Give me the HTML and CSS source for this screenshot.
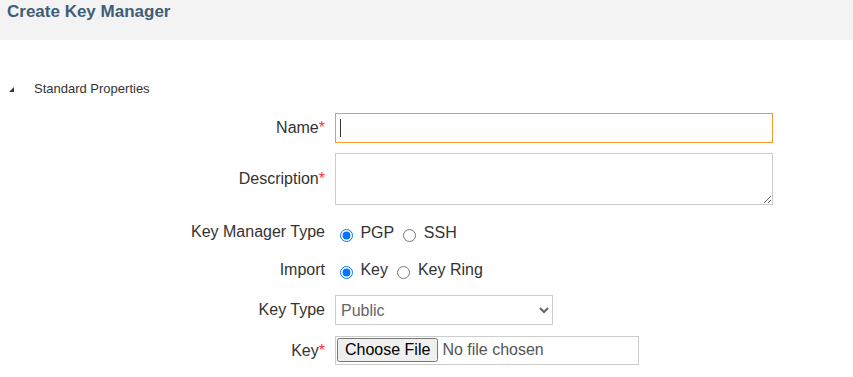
FILE: index.html
```html
<!DOCTYPE html>
<html>
<head>
<meta charset="utf-8">
<link rel="stylesheet" href="styles.css">
</head>
<body>
<div class="page-header"><h1 class="title">Create Key Manager</h1></div>
<div class="section-head"><span class="tri"></span><span class="section-title">Standard Properties</span></div>
<form class="form">
  <div class="row r-name">
    <label class="lbl" for="name">Name<span class="req">*</span></label>
    <div class="ctl input-wrap"><input id="name" class="text-input focused" type="text"><span class="caret"></span></div>
  </div>
  <div class="row r-desc">
    <label class="lbl" for="desc">Description<span class="req">*</span></label>
    <div class="ctl"><textarea id="desc" class="text-area"></textarea></div>
  </div>
  <div class="row r-kmt">
    <span class="lbl lbl-up">Key Manager Type</span>
    <div class="ctl radios"><input type="radio" name="kmt" checked> PGP <input type="radio" name="kmt"> SSH</div>
  </div>
  <div class="row r-imp">
    <span class="lbl">Import</span>
    <div class="ctl radios"><input type="radio" name="imp" checked> Key <input type="radio" name="imp"> Key Ring</div>
  </div>
  <div class="row r-type">
    <label class="lbl" for="ktype">Key Type</label>
    <div class="ctl"><select id="ktype" class="sel"><option>Public</option><option>Private</option></select></div>
  </div>
  <div class="row r-key">
    <label class="lbl" for="kfile">Key<span class="req">*</span></label>
    <div class="ctl"><input id="kfile" class="file" type="file"></div>
  </div>
</form>
</body>
</html>
```
FILE: styles.css
```css
html, body {
  margin: 0;
  padding: 0;
  background: #fff;
  font-family: "Liberation Sans", Arial, sans-serif;
  color: #333;
}
.page-header {
  height: 40px;
  box-sizing: border-box;
  background: #f3f3f3;
  padding: 2px 7px 0;
}
.title {
  margin: 0;
  font-size: 17px;
  line-height: 20px;
  font-weight: bold;
  color: #3e5e79;
}
.section-head {
  display: flex;
  align-items: center;
  height: 16px;
  margin-top: 41px;
  padding-left: 9px;
}
.tri {
  width: 0;
  height: 0;
  border-left: 5px solid transparent;
  border-bottom: 5px solid #3a3a3a;
  margin-right: 20px;
  margin-top: 1px;
}
.section-title {
  font-size: 13px;
  line-height: 16px;
  color: #333;
}
.form {
  margin: 16px 0 0;
  display: flex;
  flex-direction: column;
}
.row {
  display: grid;
  grid-template-columns: 325px 1fr;
  column-gap: 10px;
  align-items: center;
}
.r-name { height: 30px; margin-bottom: 10px; }
.r-desc { height: 52px; margin-bottom: 14px; }
.r-kmt { height: 28px; margin-bottom: 9px; }
.r-imp { height: 28px; margin-bottom: 11px; }
.r-type { height: 30px; margin-bottom: 11px; }
.r-key { height: 29px; }
.lbl {
  text-align: right;
  font-size: 16px;
  line-height: 20px;
  color: #333;
}
.lbl-up { position: relative; top: -1px; }
.req { color: #f33; }
.ctl { display: flex; align-items: center; font-size: 16px; color: #333; }
.input-wrap { position: relative; }
.caret {
  position: absolute;
  left: 5px;
  top: 6px;
  width: 1px;
  height: 18px;
  background: #333;
}
.text-input, .text-area {
  width: 438px;
  box-sizing: border-box;
  border: 1px solid #ccc;
  font-family: "Liberation Sans", Arial, sans-serif;
  font-size: 16px;
  margin: 0;
  padding: 2px 4px;
  border-radius: 0;
}
.text-input { height: 30px; }
.text-input.focused { border-color: #f7992f; outline: none; }
.text-area { height: 52px; resize: both; display: block; }
.radios { white-space: pre; }
.radios input { margin: 4px 3px 0 5px; }
.sel {
  width: 218px;
  height: 30px;
  box-sizing: border-box;
  border: 1px solid #ccc;
  border-radius: 0;
  background: #fff;
  font-family: "Liberation Sans", Arial, sans-serif;
  font-size: 16px;
  color: #666;
  padding: 0 1px;
  margin: 0;
}
.file {
  width: 304px;
  height: 29px;
  box-sizing: border-box;
  border: 1px solid #ccc;
  padding: 1px;
  font-family: "Liberation Sans", Arial, sans-serif;
  font-size: 16px;
  color: #555;
  margin: 0;
}
```
